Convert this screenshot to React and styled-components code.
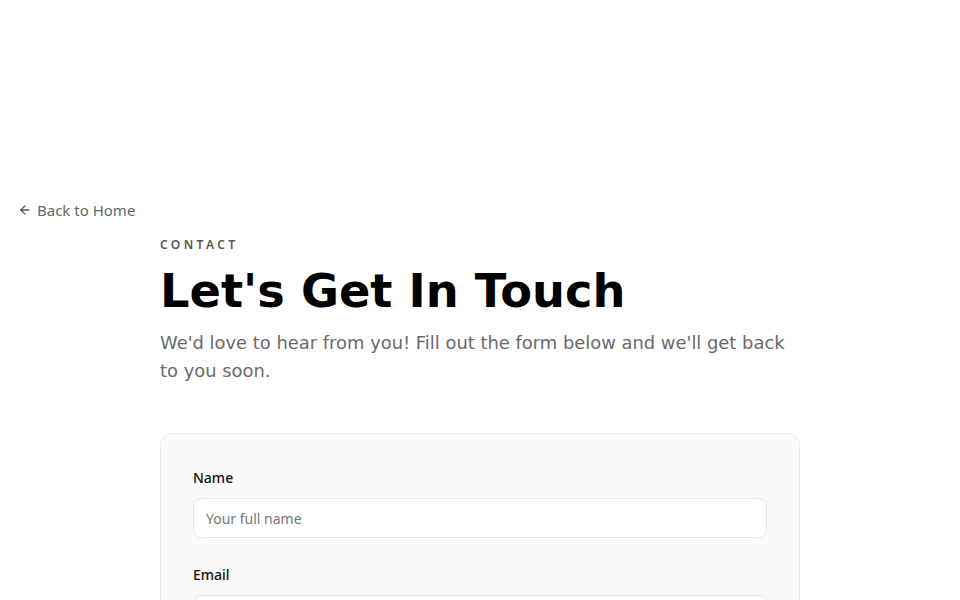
import React from "react";
import styled, { createGlobalStyle } from "styled-components";

const GlobalStyle = createGlobalStyle`
  * { box-sizing: border-box; }
  body {
    margin: 0;
    background: #fff;
    font-family: "DejaVu Sans", "Noto Sans", sans-serif;
    color: #111;
  }
`;

const Page = styled.div`
  padding: 200px 18px 40px;
`;

const BackLink = styled.a`
  display: inline-flex;
  align-items: center;
  gap: 5px;
  font-size: 15px;
  color: #666;
  text-decoration: none;
  font-family: "Noto Sans", sans-serif;
`;

const Container = styled.div`
  width: 640px;
  margin: 15px auto 0;
`;

const Eyebrow = styled.div`
  font-family: "Noto Sans", sans-serif;
  font-size: 12px;
  font-weight: 600;
  letter-spacing: 3.4px;
  color: #555;
  text-transform: uppercase;
`;

const Heading = styled.h1`
  margin: 8px 0 0;
  font-family: "DejaVu Sans", sans-serif;
  font-size: 46.3px;
  font-weight: 700;
  line-height: 60px;
  color: #000;
`;

const Lead = styled.p`
  margin: 8px 0 0;
  font-size: 17.9px;
  line-height: 28px;
  color: #6a6a6a;
  font-family: "DejaVu Sans", sans-serif;
  font-weight: 400;
`;

const Card = styled.form`
  margin-top: 48px;
  background: #fafafa;
  border: 1px solid #ebebeb;
  border-radius: 12px;
  padding: 34px 32px 32px;
  display: flex;
  flex-direction: column;
  gap: 27px;
`;

const Field = styled.div`
  display: flex;
  flex-direction: column;
  gap: 11px;
`;

const Label = styled.label`
  font-family: "Noto Sans", sans-serif;
  font-size: 14px;
  font-weight: 500;
  color: #111;
`;

const Input = styled.input`
  height: 40px;
  border: 1px solid #e6e6e6;
  border-radius: 8px;
  background: #fff;
  padding: 0 12px;
  font-family: "Noto Sans", sans-serif;
  font-size: 14px;
  color: #111;
  outline: none;
  &::placeholder { color: #777; }
`;

export default function App() {
  return (
    <>
      <GlobalStyle />
      <Page>
        <BackLink href="#">
          <svg width="14" height="14" viewBox="0 0 24 24" fill="none" stroke="#555" strokeWidth="2.2" strokeLinecap="round" strokeLinejoin="round">
            <path d="M19 12H5" />
            <path d="M12 19l-7-7 7-7" />
          </svg>
          Back to Home
        </BackLink>
        <Container>
          <Eyebrow>Contact</Eyebrow>
          <Heading>Let's Get In Touch</Heading>
          <Lead>We'd love to hear from you! Fill out the form below and we'll get back to you soon.</Lead>
          <Card onSubmit={(e) => e.preventDefault()}>
            <Field>
              <Label>Name</Label>
              <Input placeholder="Your full name" />
            </Field>
            <Field>
              <Label>Email</Label>
              <Input placeholder="you@example.com" />
            </Field>
          </Card>
        </Container>
      </Page>
    </>
  );
}
